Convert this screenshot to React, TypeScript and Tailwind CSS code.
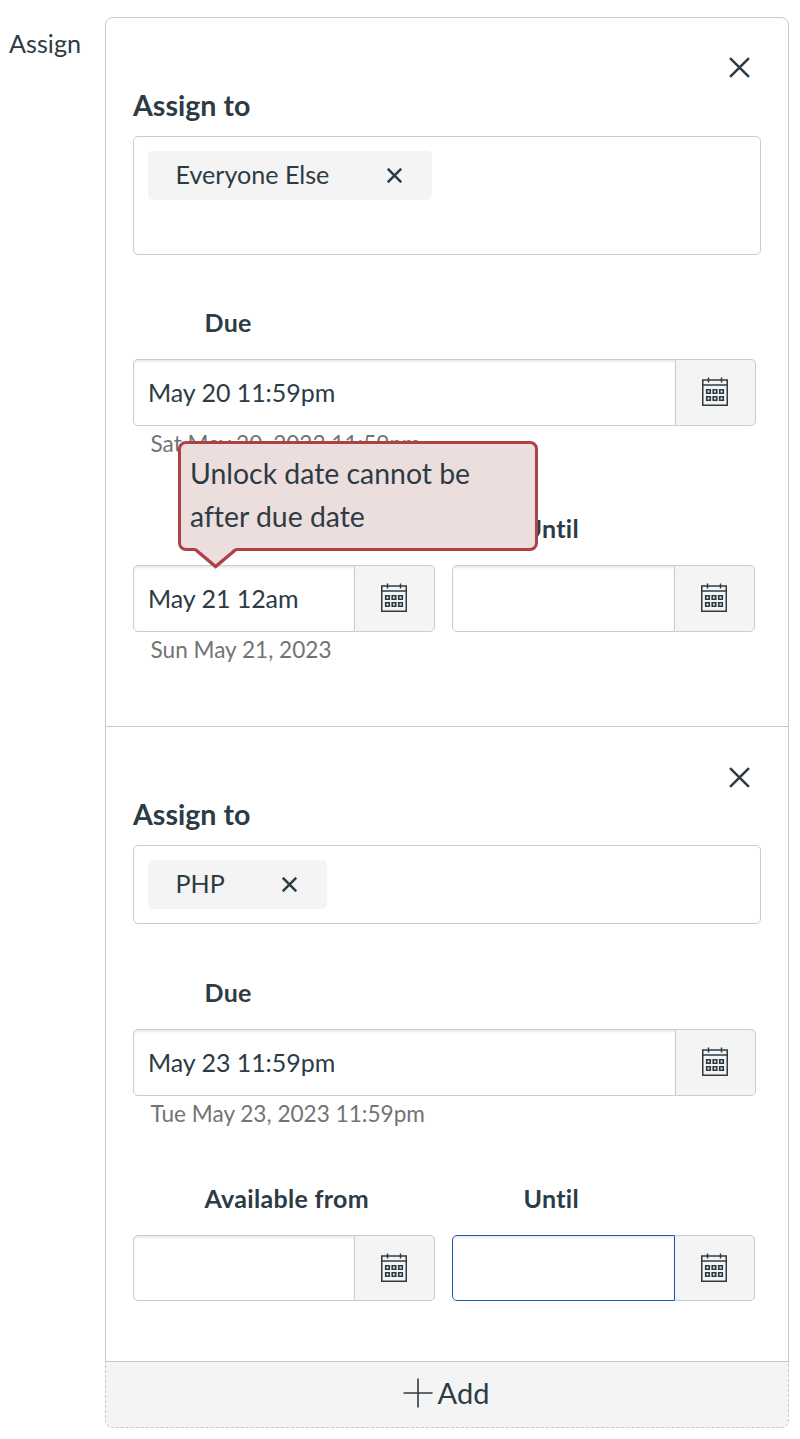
import * as React from 'react';
import { clsx } from 'clsx';

function CloseIcon({ className, strokeWidth }: { className: string; strokeWidth: number }) {
  return (
    <svg viewBox="0 0 20 20" fill="none" stroke="currentColor" strokeWidth={strokeWidth} className={className}>
      <path d="M1 1L19 19M19 1L1 19" />
    </svg>
  );
}

function CalendarIcon() {
  return (
    <svg viewBox="0 0 26 30" fill="none" stroke="currentColor" className="mr-[0.5px] mb-px h-[30px] w-[26px]">
      <path strokeWidth="1.5" d="M.75 3H25.25V28.25H.75ZM.75 8H25.25M6.5 .5V5.5M19.5 .5V5.5" />
      <path
        strokeWidth="1.7"
        d="M4.75 12.75h3.5v3.5h-3.5zM11.25 12.75h3.5v3.5h-3.5zM17.75 12.75h3.5v3.5h-3.5zM4.75 19.75h3.5v3.5h-3.5zM11.25 19.75h3.5v3.5h-3.5zM17.75 19.75h3.5v3.5h-3.5z"
      />
    </svg>
  );
}

interface DateFieldProps {
  label: string;
  value?: string;
  helper?: string;
  focused?: boolean;
  error?: string;
  className?: string;
  boxClassName?: string;
}

function DateField({ label, value = '', helper, focused, error, className, boxClassName = 'h-[67px]' }: DateFieldProps) {
  return (
    <div className={clsx('relative', className)}>
      <div className="h-[53px] pl-[71.5px] text-[25px] leading-[32px] font-bold tracking-[0.3px]">{label}</div>
      <div className={clsx('flex', boxClassName)}>
        <div
          className={clsx(
            'flex min-w-0 flex-1 items-center rounded-l-[5px] border bg-white pl-[14px] text-[25px] tracking-[-0.05px] shadow-[inset_0_2px_2px_rgba(0,0,0,0.08)]',
            focused ? 'border-[#1d54b8]' : 'border-[#c7cdd1]',
          )}
        >
          {value}
        </div>
        <div className="flex w-[80px] items-center justify-center rounded-r-[5px] border border-l-0 border-[#c7cdd1] bg-[#f4f4f4]">
          <CalendarIcon />
        </div>
      </div>
      {helper && <div className="h-0 pl-[17.5px] text-[22.6px] leading-[35px] whitespace-nowrap text-[#737373]">{helper}</div>}
      {error && <ErrorBox message={error} />}
    </div>
  );
}

function ErrorBox({ message }: { message: string }) {
  return (
    <div
      role="alert"
      className="absolute -top-[71px] left-[45px] z-10 h-[110px] w-[360px] rounded-lg border-[3px] border-[#ad4246] bg-[#eddede] pt-[8px] pr-10 pl-[9px] text-[28.4px] leading-[43px]"
    >
      {message}
      <svg viewBox="0 0 46 22" className="absolute top-[103px] left-[12px] h-[22px] w-[46px]">
        <path d="M2 1L22.6 18.5L43.2 1Z" fill="#eddede" />
        <path d="M2.3 2.4L22.6 19.6L42.9 2.4" fill="none" stroke="#ad4246" strokeWidth="3.3" />
      </svg>
    </div>
  );
}

interface AssignCardProps {
  assignee: string;
  tokenClassName: string;
  boxClassName: string;
  className: string;
  closeClassName: string;
  children: React.ReactNode;
}

function AssignCard({ assignee, tokenClassName, boxClassName, className, closeClassName, children }: AssignCardProps) {
  return (
    <section className={clsx('border-x border-b border-[#c7c7c7] px-[27px]', className)}>
      <div className={clsx('flex h-[70px] justify-end pr-[11px]', closeClassName)}>
        <CloseIcon className="h-[21px] w-[21px]" strokeWidth={2.4} />
      </div>
      <div className="h-[48px] text-[28.6px] leading-[35px] font-bold">Assign to</div>
      <div className={clsx('w-[628px] rounded-[5px] border border-[#c7cdd1] p-[14px]', boxClassName)}>
        <div className={clsx('flex h-[49px] items-center justify-between rounded-[5px] bg-[#f4f4f4] pr-[30px] pb-px pl-[27.5px] text-[25.1px]', tokenClassName)}>
          {assignee}
          <CloseIcon className="h-[15px] w-[15px]" strokeWidth={3.4} />
        </div>
      </div>
      {children}
    </section>
  );
}

export default function App() {
  return (
    <main className="flex h-[1439px] w-[800px] bg-white pt-[17px] font-[Lato,sans-serif] text-[#2d3b45] [font-variant-ligatures:none]">
      <div className="w-[105px] shrink-0 pt-[9px] pl-[9px] text-[25.2px] leading-[35px]">Assign</div>
      <div className="w-[684px]">
        <AssignCard
          assignee="Everyone Else"
          tokenClassName="w-[284px]"
          boxClassName="h-[119px]"
          className="h-[710px] rounded-t-lg border-t"
          closeClassName="pt-[39px]"
        >
          <DateField label="Due" value="May 20 11:59pm" helper="Sat May 20, 2023 11:59pm" className="mt-[51px] w-[623px]" />
          <div className="mt-[86px] flex gap-[17px]">
            <DateField
              label="Available from"
              value="May 21 12am"
              helper="Sun May 21, 2023"
              error="Unlock date cannot be after due date"
              className="w-[302px]"
            />
            <DateField label="Until" className="w-[303px]" />
          </div>
        </AssignCard>
        <AssignCard
          assignee="PHP"
          tokenClassName="w-[179px]"
          boxClassName="h-[79px]"
          className="h-[635px]"
          closeClassName="pt-[40px]"
        >
          <DateField label="Due" value="May 23 11:59pm" helper="Tue May 23, 2023 11:59pm" className="mt-[52px] w-[623px]" />
          <div className="mt-[86px] flex gap-[17px]">
            <DateField label="Available from" className="w-[302px]" boxClassName="h-[66px]" />
            <DateField label="Until" focused className="w-[303px]" boxClassName="h-[66px]" />
          </div>
        </AssignCard>
        <button className="flex h-[66px] w-full items-center justify-center gap-[5px] rounded-b-lg border border-t-0 border-dashed border-[#c7c7c7] bg-[#f4f4f4] pr-[2px] pb-[3px] text-[29px]">
          <svg viewBox="0 0 30 30" stroke="currentColor" strokeWidth="1.6" className="h-[30px] w-[30px]">
            <path d="M15 .5V29.5M.5 15H29.5" />
          </svg>
          Add
        </button>
      </div>
    </main>
  );
}
